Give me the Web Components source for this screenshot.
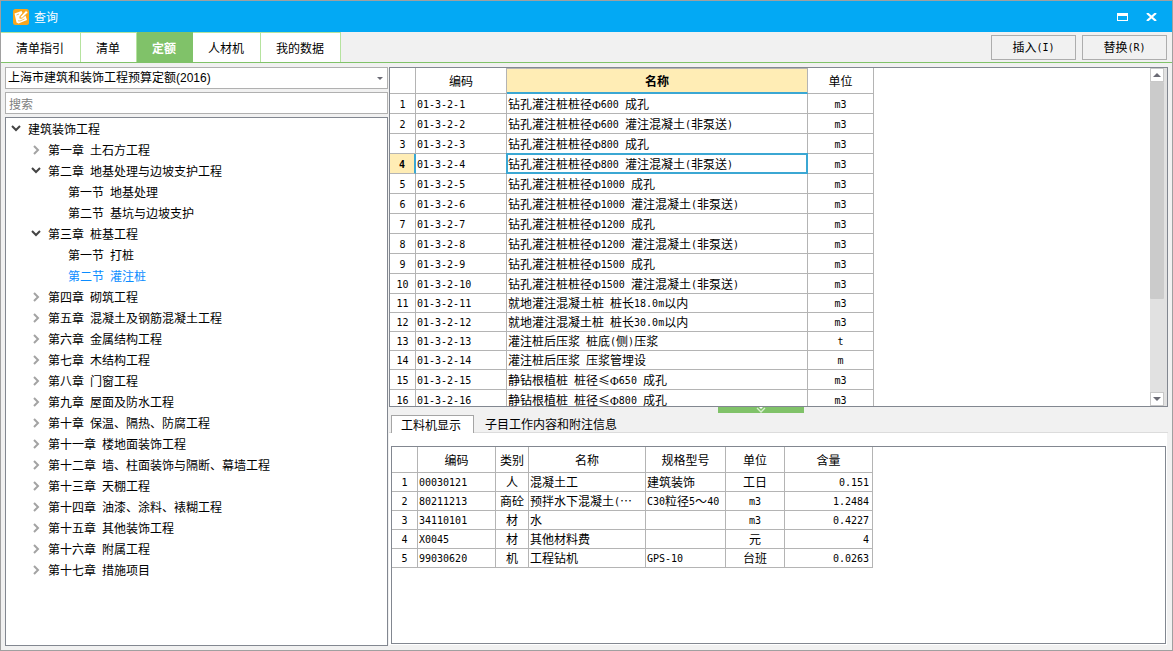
<!DOCTYPE html>
<html lang="zh-CN">
<head>
<meta charset="utf-8">
<title>查询</title>
<style>
  html, body { margin: 0; height: 100%; }
  body {
    --line: #828790;
    --cell: #b4b4b4;
    --green: #80c269;
    --face: #f1f1f1;
    font: 12px/18px "Noto Sans CJK SC", sans-serif;
    color: #000;
  }
</style>
</head>
<body>
<query-window></query-window>

<script>
const MONO = `.m{font:10px/1 "DejaVu Sans Mono",monospace;font-weight:inherit;white-space:pre;vertical-align:1px}
.phi{font:12px/1 "Liberation Serif",serif}`;

/* Latin runs are set in a half-width face beside the full-width characters. */
const mix = s => String(s)
  .replace(/[\x20-\x7e]+/g, r => `<span class="m">${r}</span>`)
  .replace(/Φ/g, '<span class="phi">Φ</span>');

const define = (name, html) => customElements.define(name, class extends HTMLElement {
  connectedCallback() {
    if (this.shadowRoot) return;
    const t = document.createElement('template');
    t.innerHTML = typeof html === 'function' ? html(this) : html;
    this.attachShadow({ mode: 'open' }).append(t.content.cloneNode(true));
  }
});

define('title-bar', `
<style>
  :host { display: flex; align-items: center; height: 31px; flex: none; background: #03a9f4; color: #fff; padding: 0 11px 0 12px; gap: 5px; box-sizing: border-box; }
  svg { display: block; }
  h1 { font: inherit; margin: 0; flex: 1; }
  button { all: unset; display: grid; place-items: center; width: 20px; height: 20px; }
  button + button { margin-left: 4px; }
</style>
<svg width="16" height="16" viewBox="0 0 16 16" aria-hidden="true">
  <rect width="16" height="16" rx="2.5" fill="#f9a61c"/>
  <path d="M1.5 4.5 8.5 2 9.5 4 6.5 7.5 6.5 9.5 8.5 9.5 12.5 6.5 14 11 5.5 14.5 3.5 13.5z" fill="#fff"/>
  <path d="M7.5 7.5 13 1.5 15 3.5 9.5 8.8 7.3 9.2z" fill="#fff" stroke="#f9a61c" stroke-width=".7"/>
  <path d="M3.5 6 6 5M5 11.8 7 12 11.5 10" fill="none" stroke="#f9b84a" stroke-width=".9"/>
</svg>
<h1><slot></slot></h1>
<button aria-label="最大化"><svg width="11" height="8" shape-rendering="crispEdges"><path d="M0 0h11v8H0zM1 3v4h9V3z" fill="#fff" fill-rule="evenodd"/></svg></button>
<button aria-label="关闭"><svg width="11" height="8" viewBox="0 0 11 8"><path d="M1 0 10 8M10 0 1 8" stroke="#fff" stroke-width="2.2"/></svg></button>`);

define('nav-tab', el => `
<style>
  :host { display: flex; border-top: 1px solid #b5e39f; border-right: 1px solid #b5e39f; background: #fff; }
  button { all: unset; padding: 0 16px 0 15px; }
  :host([active]) { background: var(--green); border-color: var(--green); color: #fff; font-weight: bold; }
</style>
<button role="tab" aria-selected="${el.hasAttribute('active')}"><slot></slot></button>`);

define('push-button', el => `
<style>
  :host { display: block; }
  button { width: 85px; height: 25px; padding: 0; border: 1px solid #adadad; background: var(--face); font: inherit; color: inherit; display: block; }
  ${MONO}
</style>
<button>${mix(el.getAttribute('label'))}</button>`);

define('quota-select', `
<style>
  :host { display: flex; position: relative; }
  select { appearance: none; flex: 1; min-width: 0; height: 22px; border: 1px solid #b0b0b0; background: #fff; border-radius: 0; padding: 0 20px 0 2px; margin: 0; color: #000; font: 12px/20px "Liberation Sans","Noto Sans CJK SC",sans-serif; }
  svg { position: absolute; right: 5px; top: 10px; pointer-events: none; }
</style>
<select aria-label="定额库"><option>上海市建筑和装饰工程预算定额(2016)</option></select>
<svg width="6" height="3"><path d="M0 0H6L3 3z" fill="#6b6b75"/></svg>`);

define('search-box', `
<style>
  :host { display: flex; }
  input { flex: 1; min-width: 0; height: 22px; box-sizing: border-box; border: 1px solid #b0b0b0; padding: 0 3px; font: inherit; margin: 0; background: #fff; }
  input::placeholder { color: #808080; opacity: 1; }
</style>
<input type="text" aria-label="搜索" placeholder="搜索">`);

define('tree-item', el => {
  const s = el.getAttribute('state');
  const icon = s === 'open' ? '<path d="M1 2 5 6 9 2" stroke="#444"/>'
    : s === 'closed' ? '<path d="M3 1 7 5 3 9" stroke="#a3a3a3"/>' : '';
  return `
<style>
  :host { display: flex; align-items: center; height: 21px; gap: 7px; padding-left: calc(5px + 20px * var(--level)); white-space: nowrap; }
  :host([selected]) { color: #0a8cff; }
  svg { flex: none; }
  ${MONO}
</style>
<svg width="10" height="10" fill="none" stroke-width="2" aria-hidden="true">${icon}</svg>
<span>${mix(el.getAttribute('label'))}</span>`;
});

const TREE = [
  [0, 'open', '建筑装饰工程'], [1, 'closed', '第一章 土石方工程'],
  [1, 'open', '第二章 地基处理与边坡支护工程'], [2, '', '第一节 地基处理'], [2, '', '第二节 基坑与边坡支护'],
  [1, 'open', '第三章 桩基工程'], [2, '', '第一节 打桩'], [2, '', '第二节 灌注桩', true],
  ...['第四章 砌筑工程', '第五章 混凝土及钢筋混凝土工程', '第六章 金属结构工程', '第七章 木结构工程', '第八章 门窗工程',
    '第九章 屋面及防水工程', '第十章 保温、隔热、防腐工程', '第十一章 楼地面装饰工程', '第十二章 墙、柱面装饰与隔断、幕墙工程',
    '第十三章 天棚工程', '第十四章 油漆、涂料、裱糊工程', '第十五章 其他装饰工程', '第十六章 附属工程', '第十七章 措施项目'
  ].map(t => [1, 'closed', t])
];

define('chapter-tree', `
<style>
  :host { display: block; background: #fff; border: 1px solid var(--line); overflow: hidden; min-height: 0; }
</style>
<div role="tree">${TREE.map(([l, s, t, sel]) =>
  `<tree-item role="treeitem" style="--level:${l}" state="${s}" label="${t}"${sel ? ' selected' : ''}></tree-item>`).join('')}</div>`);

const GRIDS = {
  quota: {
    widths: [26, 91, 301, 66], heads: ['', '编码', '名称', '单位'], align: 'cllc', current: [4, 2],
    rows: [
      '钻孔灌注桩桩径Φ600 成孔', '钻孔灌注桩桩径Φ600 灌注混凝土(非泵送)', '钻孔灌注桩桩径Φ800 成孔',
      '钻孔灌注桩桩径Φ800 灌注混凝土(非泵送)', '钻孔灌注桩桩径Φ1000 成孔', '钻孔灌注桩桩径Φ1000 灌注混凝土(非泵送)',
      '钻孔灌注桩桩径Φ1200 成孔', '钻孔灌注桩桩径Φ1200 灌注混凝土(非泵送)', '钻孔灌注桩桩径Φ1500 成孔',
      '钻孔灌注桩桩径Φ1500 灌注混凝土(非泵送)', '就地灌注混凝土桩 桩长18.0m以内', '就地灌注混凝土桩 桩长30.0m以内',
      '灌注桩后压浆 桩底(侧)压浆', '灌注桩后压浆 压浆管埋设', '静钻根植桩 桩径≤Φ650 成孔', '静钻根植桩 桩径≤Φ800 成孔'
    ].map((t, i) => [i + 1, `01-3-2-${i + 1}`, t, { 12: 't', 13: 'm' }[i] || 'm3']),
    tight: i => i >= 10 && i <= 13
  },
  resource: {
    widths: [26, 78, 33, 117, 80, 59, 88], heads: ['', '编码', '类别', '名称', '规格型号', '单位', '含量'], align: 'clcllcr',
    rows: [
      [1, '00030121', '人', '混凝土工', '建筑装饰', '工日', '0.151'],
      [2, '80211213', '商砼', '预拌水下混凝土(…', 'C30粒径5～40', 'm3', '1.2484'],
      [3, '34110101', '材', '水', '', 'm3', '0.4227'],
      [4, 'X0045', '材', '其他材料费', '', '元', '4'],
      [5, '99030620', '机', '工程钻机', 'GPS-10', '台班', '0.0263']
    ],
    tight: () => true
  }
};

define('data-grid', el => {
  const g = GRIDS[el.getAttribute('source')];
  const [cr, cc] = g.current || [];
  return `
<style>
  :host { display: block; overflow: hidden; background: #fff; }
  table { border-collapse: separate; border-spacing: 0; table-layout: fixed; width: ${g.widths.reduce((a, b) => a + b)}px; }
  th, td { box-sizing: border-box; height: 20px; padding: 0 3px 0 1px; border: 0 solid var(--cell); border-width: 0 1px 1px 0; font-weight: normal; line-height: 16px; white-space: nowrap; text-align: left; }
  thead th { height: 26px; }
  .tight > * { height: 19px; }
  .c, th { text-align: center; padding: 0 2px; } .r { text-align: right; }
  thead .on { font-weight: bold; background: #ffedb5; border-bottom: 2px solid #3ba7d3; box-shadow: inset 0 1px var(--cell); padding-top: 1px; }
  tbody th.on { font-weight: bold; background: #ffedb5; border-right: 2px solid #3ba7d3; }
  td.on { position: relative; }
  td.on::after { content: ""; position: absolute; inset: -1px; border: 2px solid #3ba7d3; }
  ${MONO}
</style>
<table>
  <colgroup>${g.widths.map(w => `<col style="width:${w}px">`).join('')}</colgroup>
  <thead><tr>${g.heads.map((h, i) => `<th scope="col"${i && i === cc ? ' class="on"' : ''}>${h}</th>`).join('')}</tr></thead>
  <tbody>${g.rows.map((r, i) => `<tr${g.tight(i) ? ' class="tight"' : ''}>${r.map((v, j) => j
    ? `<td class="${g.align[j]}${r[0] === cr && j === cc ? ' on' : ''}">${mix(v)}</td>`
    : `<th scope="row"${v === cr ? ' class="on"' : ''}>${mix(v)}</th>`).join('')}</tr>`).join('')}</tbody>
</table>`;
});

define('scroll-bar', `
<style>
  :host { display: flex; width: 17px; background: #e1e1e1; }
  div { display: flex; flex-direction: column; width: 14px; }
  button { all: unset; flex: none; box-sizing: border-box; height: 14px; display: grid; place-items: center; background: #fff; border: 1px solid #c8c8c8; }
  i { flex: 217 1 0; background: #cbcbcb; border-radius: 1px; }
  b { flex: 93 1 0; }
</style>
<div>
  <button aria-label="向上滚动"><svg width="8" height="4"><path d="M0 4H8L4 0z" fill="#6b6b75"/></svg></button>
  <i></i><b></b>
  <button aria-label="向下滚动"><svg width="8" height="4"><path d="M0 0H8L4 4z" fill="#6b6b75"/></svg></button>
</div>`);

define('split-handle', `
<style>
  :host { display: flex; justify-content: center; height: 6px; flex: none; padding-right: 35px; }
  button { all: unset; width: 86px; height: 6px; background: var(--green); }
  svg { display: block; margin: 0 auto; }
</style>
<button aria-label="收起"><svg width="10" height="6" fill="none"><path d="M3 0H7L5 2z" fill="#fff"/><path d="M1 1 5 5 9 1" stroke="#d9f0d0" stroke-width="1.3"/></svg></button>`);

define('detail-pane', `
<style>
  :host { display: flex; flex-direction: column; min-height: 0; }
  nav { display: flex; height: 20px; flex: none; align-items: stretch; box-sizing: border-box; padding: 2px 0 0 2px; border-bottom: 1px solid #dcdcdc; }
  button { all: unset; box-sizing: border-box; line-height: 17px; padding: 0 11px; }
  .on { background: #fff; border: 1px solid #a5a5a5; border-bottom: 0; margin-bottom: -1px; height: 18px; padding: 0 12px 0 9px; line-height: 16px; }
  section { flex: 1; min-height: 0; display: flex; background: #fff; padding: 13px 1px 1px 2px; margin-right: 1px; }
  data-grid { flex: 1; border: 1px solid var(--line); }
</style>
<nav role="tablist"><button role="tab" class="on" aria-selected="true">工料机显示</button><button role="tab" aria-selected="false">子目工作内容和附注信息</button></nav>
<section><data-grid source="resource"></data-grid></section>`);

define('query-window', `
<style>
  :host { display: flex; flex-direction: column; box-sizing: border-box; height: 100vh; border: 1px solid #a0a0a0; background: var(--face); overflow: hidden; }
  header { display: flex; align-items: center; gap: 6px; height: 31px; flex: none; box-sizing: border-box; border-bottom: 1px solid var(--green); padding-right: 5px; }
  nav { display: flex; flex: 1; align-self: stretch; }
  nav-tab { align-items: center; }
  main { flex: 1; min-height: 0; display: grid; grid-template-columns: minmax(0, 383fr) minmax(0, 779fr); column-gap: 1px; padding: 4px; }
  .side { display: grid; grid-template-rows: auto auto minmax(0, 1fr); row-gap: 3px; min-height: 0; }
  .work { display: grid; grid-template-rows: minmax(0, 340fr) minmax(0, 239fr); min-height: 0; }
  .top { min-height: 0; display: flex; box-sizing: border-box; border: 1px solid var(--line); background: #fff; }
  .bottom { min-height: 0; display: flex; flex-direction: column; padding-bottom: 1px; }
  .top data-grid, detail-pane { flex: 1; }
</style>
<title-bar>查询</title-bar>
<header>
  <nav role="tablist">
    <nav-tab>清单指引</nav-tab><nav-tab>清单</nav-tab><nav-tab active>定额</nav-tab><nav-tab>人材机</nav-tab><nav-tab>我的数据</nav-tab>
  </nav>
  <push-button label="插入(I)"></push-button>
  <push-button label="替换(R)"></push-button>
</header>
<main>
  <div class="side"><quota-select></quota-select><search-box></search-box><chapter-tree></chapter-tree></div>
  <div class="work">
    <div class="top"><data-grid source="quota"></data-grid><scroll-bar></scroll-bar></div>
    <div class="bottom"><split-handle></split-handle><detail-pane></detail-pane></div>
  </div>
</main>`);
</script>
</body>
</html>
